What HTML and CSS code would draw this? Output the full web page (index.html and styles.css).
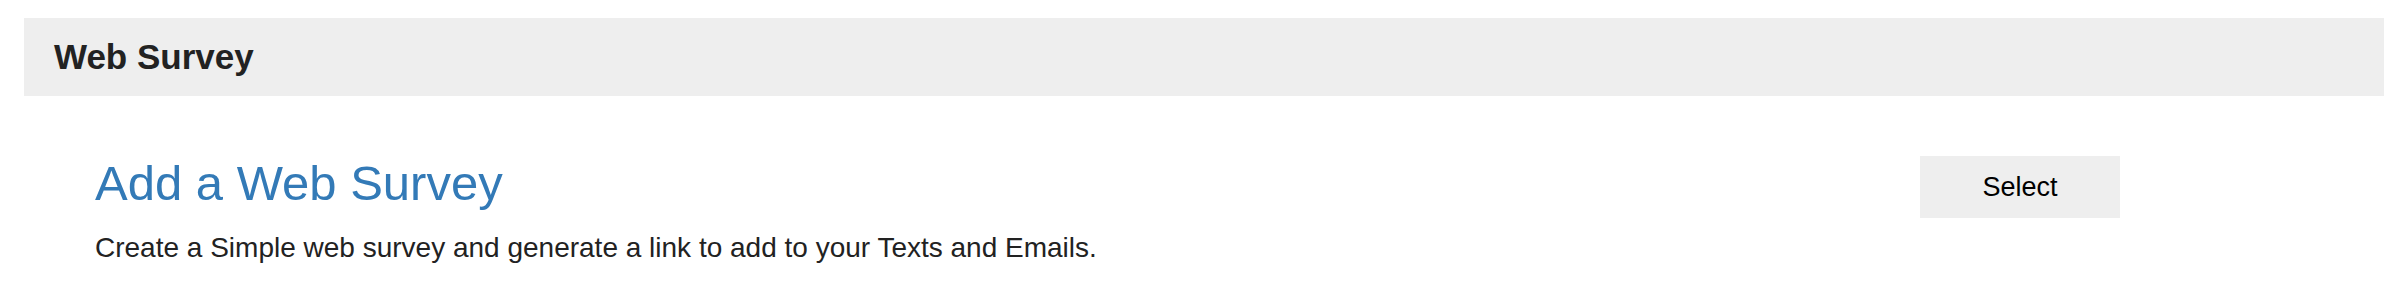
FILE: index.html
```html
<!DOCTYPE html>
<html lang="en">
<head>
<meta charset="utf-8">
<title>Web Survey</title>
<link rel="stylesheet" href="styles.css">
</head>
<body>
  <div class="panel-header">
    <h2 class="panel-title">Web Survey</h2>
  </div>
  <div class="survey-row">
    <div class="survey-info">
      <h1 class="survey-title">Add a Web Survey</h1>
      <p class="survey-desc">Create a Simple web survey and generate a link to add to your Texts and Emails.</p>
    </div>
    <button class="select-btn" type="button">Select</button>
  </div>
</body>
</html>
```

FILE: styles.css
```css
html, body {
  margin: 0;
  padding: 0;
  background: #ffffff;
}

body {
  font-family: "Liberation Sans", Arial, Helvetica, sans-serif;
  color: #222222;
}

.panel-header {
  margin: 18px 12px 0 24px;
  height: 78px;
  padding: 0 30px;
  background: #eeeeee;
  display: flex;
  align-items: center;
}

.panel-title {
  margin: 0;
  font-size: 35px;
  font-weight: bold;
  color: #222222;
  line-height: 1.15;
}

.survey-row {
  display: flex;
  justify-content: space-between;
  align-items: flex-start;
  padding: 60px 276px 0 95px;
}

.survey-title {
  margin: 0;
  font-size: 49px;
  font-weight: normal;
  line-height: 54px;
  color: #337ab7;
}

.survey-desc {
  margin: 22px 0 0 0;
  font-size: 28px;
  line-height: 32px;
  color: #222222;
}

.select-btn {
  width: 200px;
  height: 62px;
  border: 0;
  border-radius: 0;
  background: #eeeeee;
  font-family: "Liberation Sans", Arial, Helvetica, sans-serif;
  font-size: 27px;
  color: #000000;
  padding: 0;
  margin: 0;
}
```
